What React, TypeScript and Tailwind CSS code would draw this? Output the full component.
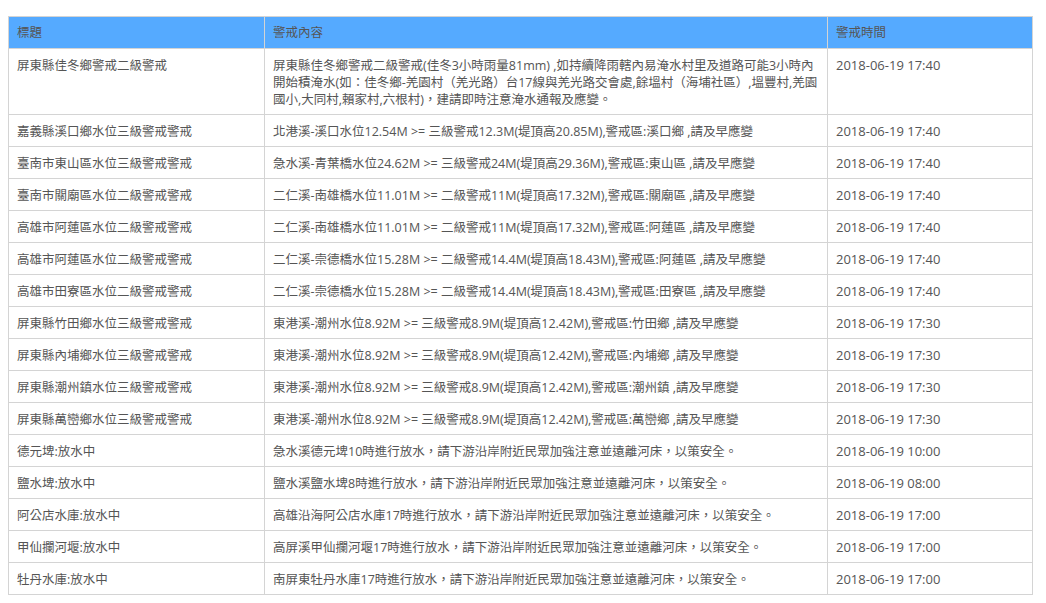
const rows: [string, string, string][] = [
  ["屏東縣佳冬鄉警戒二級警戒", "屏東縣佳冬鄉警戒二級警戒(佳冬3小時雨量81mm) ,如持續降雨轄內易淹水村里及道路可能3小時內開始積淹水(如：佳冬鄉-羌園村（羌光路）台17線與羌光路交會處,餘塭村（海埔社區）,塭豐村,羌園國小,大同村,賴家村,六根村)，建請即時注意淹水通報及應變。", "2018-06-19 17:40"],
  ["嘉義縣溪口鄉水位三級警戒警戒", "北港溪-溪口水位12.54M >= 三級警戒12.3M(堤頂高20.85M),警戒區:溪口鄉 ,請及早應變", "2018-06-19 17:40"],
  ["臺南市東山區水位三級警戒警戒", "急水溪-青葉橋水位24.62M >= 三級警戒24M(堤頂高29.36M),警戒區:東山區 ,請及早應變", "2018-06-19 17:40"],
  ["臺南市關廟區水位二級警戒警戒", "二仁溪-南雄橋水位11.01M >= 二級警戒11M(堤頂高17.32M),警戒區:關廟區 ,請及早應變", "2018-06-19 17:40"],
  ["高雄市阿蓮區水位二級警戒警戒", "二仁溪-南雄橋水位11.01M >= 二級警戒11M(堤頂高17.32M),警戒區:阿蓮區 ,請及早應變", "2018-06-19 17:40"],
  ["高雄市阿蓮區水位二級警戒警戒", "二仁溪-崇德橋水位15.28M >= 二級警戒14.4M(堤頂高18.43M),警戒區:阿蓮區 ,請及早應變", "2018-06-19 17:40"],
  ["高雄市田寮區水位二級警戒警戒", "二仁溪-崇德橋水位15.28M >= 二級警戒14.4M(堤頂高18.43M),警戒區:田寮區 ,請及早應變", "2018-06-19 17:40"],
  ["屏東縣竹田鄉水位三級警戒警戒", "東港溪-潮州水位8.92M >= 三級警戒8.9M(堤頂高12.42M),警戒區:竹田鄉 ,請及早應變", "2018-06-19 17:30"],
  ["屏東縣內埔鄉水位三級警戒警戒", "東港溪-潮州水位8.92M >= 三級警戒8.9M(堤頂高12.42M),警戒區:內埔鄉 ,請及早應變", "2018-06-19 17:30"],
  ["屏東縣潮州鎮水位三級警戒警戒", "東港溪-潮州水位8.92M >= 三級警戒8.9M(堤頂高12.42M),警戒區:潮州鎮 ,請及早應變", "2018-06-19 17:30"],
  ["屏東縣萬巒鄉水位三級警戒警戒", "東港溪-潮州水位8.92M >= 三級警戒8.9M(堤頂高12.42M),警戒區:萬巒鄉 ,請及早應變", "2018-06-19 17:30"],
  ["德元埤:放水中", "急水溪德元埤10時進行放水，請下游沿岸附近民眾加強注意並遠離河床，以策安全。", "2018-06-19 10:00"],
  ["鹽水埤:放水中", "鹽水溪鹽水埤8時進行放水，請下游沿岸附近民眾加強注意並遠離河床，以策安全。", "2018-06-19 08:00"],
  ["阿公店水庫:放水中", "高雄沿海阿公店水庫17時進行放水，請下游沿岸附近民眾加強注意並遠離河床，以策安全。", "2018-06-19 17:00"],
  ["甲仙攔河堰:放水中", "高屏溪甲仙攔河堰17時進行放水，請下游沿岸附近民眾加強注意並遠離河床，以策安全。", "2018-06-19 17:00"],
  ["牡丹水庫:放水中", "南屏東牡丹水庫17時進行放水，請下游沿岸附近民眾加強注意並遠離河床，以策安全。", "2018-06-19 17:00"],
];

export default function App() {
  return (
    <div className="w-[1046px] h-[603px] bg-white overflow-hidden pt-4 pl-2" style={{ fontFamily: '"Open Sans", "Noto Sans CJK TC", sans-serif' }}>
      <table className="w-[1024px] border-collapse table-fixed text-[12.5px] leading-[17px] text-[#555]">
        <colgroup>
          <col className="w-[256px]" />
          <col className="w-[563px]" />
          <col className="w-[205px]" />
        </colgroup>
        <thead>
          <tr className="bg-[#55aaff]">
            {["標題", "警戒內容", "警戒時間"].map((h) => (
              <th key={h} className="border border-[#d4d4d4] text-left font-normal px-2 py-[7px] align-middle text-[#555]">{h}</th>
            ))}
          </tr>
        </thead>
        <tbody>
          {rows.map((r, i) => (
            <tr key={i}>
              {r.map((c, j) => (
                <td key={j} className={`border border-[#d4d4d4] align-top px-2 pt-[8px] pb-[6px] ${j === 2 ? "text-[13px]" : ""}`}>{c}</td>
              ))}
            </tr>
          ))}
        </tbody>
      </table>
    </div>
  );
}
